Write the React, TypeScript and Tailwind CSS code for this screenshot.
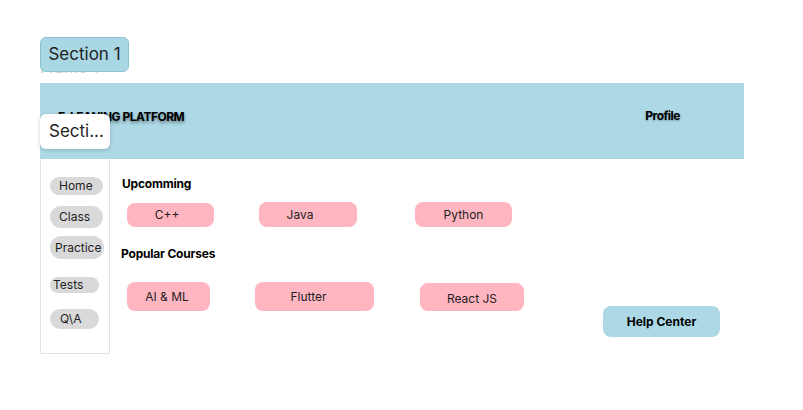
import React from "react";

const font = { fontFamily: "Inter, 'Noto Sans', sans-serif" };

function NavPill({ label, cls }: { label: string; cls: string }) {
  return (
    <div className={`bg-[#d9d9d9] rounded-full text-[12px] text-[#1e1e1e] flex items-center ${cls}`}>
      {label}
    </div>
  );
}

function Course({ label, cls }: { label: string; cls: string }) {
  return (
    <div className={`bg-[#ffb6c1] rounded-[8px] text-[12px] text-[#1e1e1e] flex items-center justify-center shrink-0 ${cls}`}>
      {label}
    </div>
  );
}

export default function App() {
  return (
    <div className="relative w-[803px] h-[410px] bg-white overflow-hidden" style={font}>
      {/* Figma canvas labels */}
      <div className="absolute left-[40px] top-[57px] text-[16px] leading-[20px] text-[#cfcfcf]">Frame 1</div>
      <div className="absolute left-[40px] top-[37px] w-[89px] h-[35px] rounded-[6px] bg-[#a9d7e4] border border-[#8cc2d2] flex items-center justify-center text-[17px] text-[#1f1f1f]">
        Section 1
      </div>

      {/* Frame */}
      <div className="pt-[83px] pl-[40px]">
        <div className="w-[704px]">
          <div className="h-[76px] bg-[#add8e6] flex items-start pt-[26px] pl-[18px] text-[12px] leading-[16px] font-bold text-black">
            <span className="[text-shadow:0_2px_3px_rgba(0,0,0,0.45)] tracking-[-0.5px]">E-LEANING PLATFORM</span>
            <span className="ml-[461px] -mt-[1px] [text-shadow:0_1px_2px_rgba(0,0,0,0.3)] tracking-[-0.5px]">Profile</span>
          </div>
          <div className="flex">
            <div className="w-[70px] h-[195px] border border-t-0 border-[#e3e3e3] flex flex-col items-start pl-[9px] pt-[18px]">
              <NavPill label="Home" cls="w-[53px] h-[18px] pl-[9px]" />
              <NavPill label="Class" cls="w-[53px] h-[22px] pl-[9px] mt-[11px]" />
              <NavPill label="Practice" cls="w-[54px] h-[23px] pl-[5px] mt-[8px]" />
              <NavPill label="Tests" cls="w-[49px] h-[16px] pl-[3px] mt-[18px]" />
              <NavPill label="Q\A" cls="w-[49px] h-[20px] pl-[10px] mt-[16px]" />
            </div>
            <div className="flex-1 pl-[12px] pt-[17px]">
              <div className="text-[12px] leading-[16px] font-bold text-black tracking-[-0.2px]">Upcomming</div>
              <div className="flex items-start mt-[10px]">
                <Course label="C++" cls="ml-[5px] mt-[1px] w-[87px] h-[24px] pr-[7px]" />
                <Course label="Java" cls="ml-[45px] w-[98px] h-[25px] pr-[16px]" />
                <Course label="Python" cls="ml-[58px] w-[97px] h-[25px] pt-[1px]" />
              </div>
              <div className="text-[12px] leading-[16px] font-bold text-black mt-[19px] -ml-[1px] tracking-[-0.2px]">Popular Courses</div>
              <div className="flex items-start mt-[20px]">
                <Course label="AI & ML" cls="ml-[5px] w-[83px] h-[29px] pr-[3px]" />
                <Course label="Flutter" cls="ml-[45px] w-[119px] h-[29px] pr-[12px]" />
                <Course label="React JS" cls="ml-[46px] mt-[1px] w-[104px] h-[28px] pt-[3px]" />
                <div className="ml-[79px] mt-[24px] w-[117px] h-[31px] rounded-[8px] bg-[#add8e6] flex items-center justify-center text-[12px] font-bold text-black shrink-0">
                  Help Center
                </div>
              </div>
            </div>
          </div>
        </div>
      </div>

      <div className="absolute left-[40px] top-[114px] w-[70px] h-[35px] rounded-[6px] bg-white shadow-[0_1px_4px_rgba(0,0,0,0.18)] flex items-center pl-[9px] text-[17px] text-[#1f1f1f]">
        Secti...
      </div>
    </div>
  );
}
